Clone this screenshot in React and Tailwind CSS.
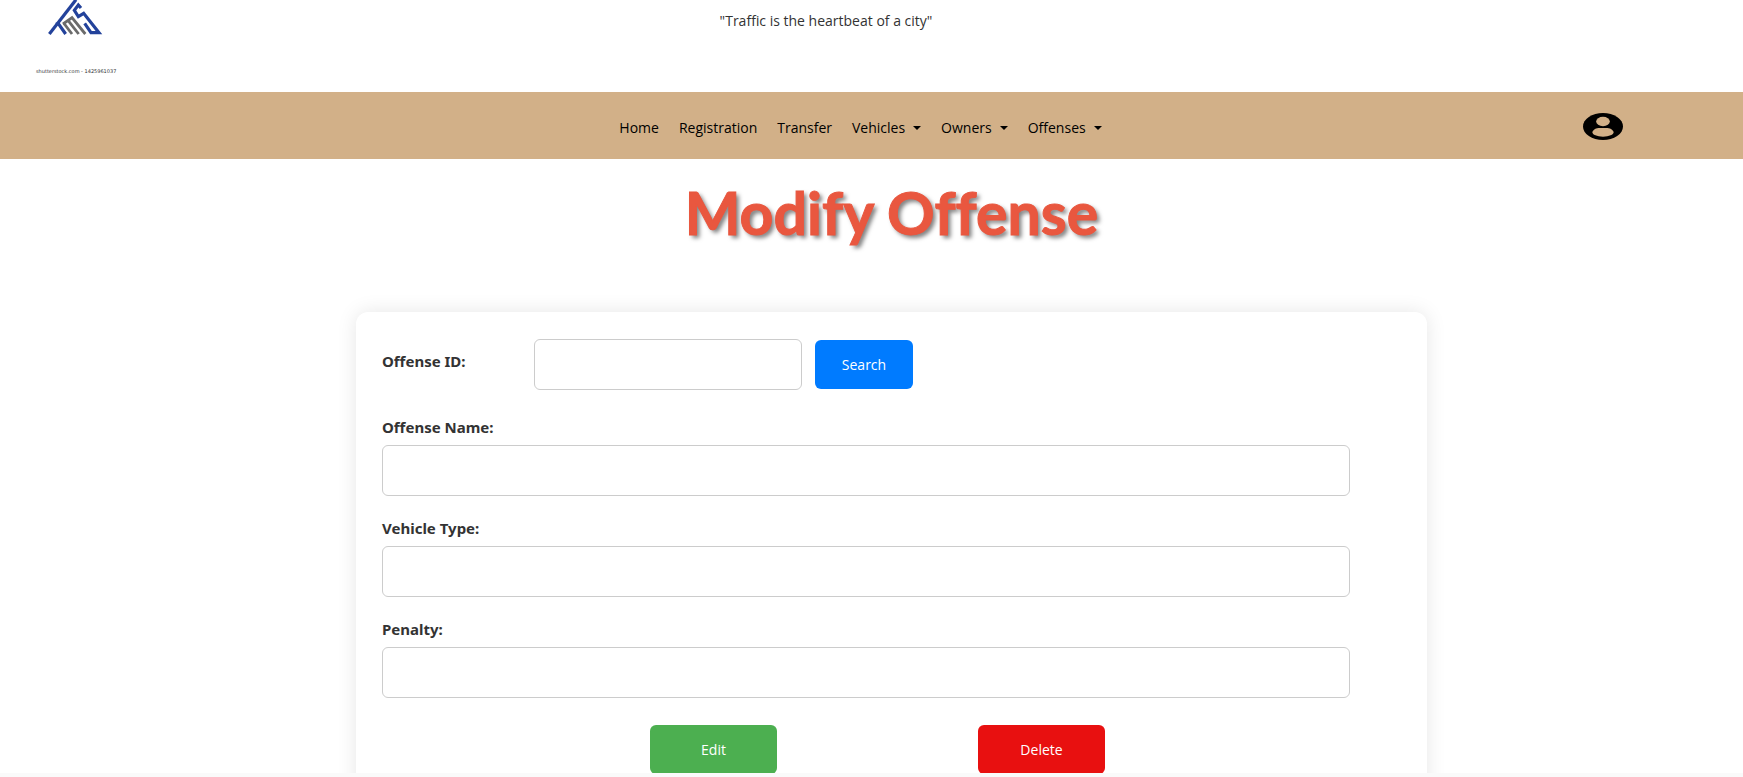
function Logo() {
  return (
    <svg className="ml-[11px] h-[35px] w-14" viewBox="141 0 168 105" fill="none" role="img" aria-label="TMS logo">
      <g stroke="#23429b" strokeWidth="9.5" strokeLinejoin="miter">
        <path d="M228 -1 L148 102" />
        <path d="M167 72 H176 L197 102" />
        <path d="M243 24 L235 15 L223 31 L235 50 L251 40 L297 98 H273 L254 70" />
      </g>
      <g stroke="#6b6b6b" strokeWidth="8.5">
        <path d="M189 72 L216 53 L256 102" />
        <path d="M191 69 L216 102" />
        <path d="M204 61 L236 102" />
      </g>
    </svg>
  );
}

function UserIcon() {
  return (
    <svg className="h-[27px] w-10" viewBox="0 0 120 81" preserveAspectRatio="none">
      <ellipse cx="60" cy="40.500" rx="60" ry="40.500" fill="#000" />
      <ellipse cx="60" cy="25.500" rx="20.500" ry="14" fill="#d2b088" />
      <path d="M28 58 C30 49 40 45 50 45 H70 C80 45 90 49 92 58 C92 65 78 71 60 71 S28 65 28 58Z" fill="#d2b088" />
    </svg>
  );
}

const links = [
  { label: "Home" },
  { label: "Registration" },
  { label: "Transfer" },
  { label: "Vehicles", menu: true },
  { label: "Owners", menu: true },
  { label: "Offenses", menu: true },
];

function NavLink({ label, menu }) {
  return (
    <li>
      <a href="#" className="flex items-center gap-2 text-black">
        {label}
        {menu && (
          <svg className="h-1 w-2" viewBox="0 0 8 4" aria-hidden="true">
            <path d="M0 0H8L4 4Z" fill="currentColor" />
          </svg>
        )}
      </a>
    </li>
  );
}

const inputStyle = "h-[51px] rounded-md border border-[#ccc] bg-white px-3 outline-none";
const labelStyle = "font-['Noto_Sans',sans-serif] text-[15px] leading-6 font-bold";

function Field({ id, label }) {
  return (
    <div className="mb-5 flex flex-col">
      <label htmlFor={id} className={`${labelStyle} mb-1.5`}>{label}</label>
      <input id={id} type="text" className={`${inputStyle} w-[95%]`} />
    </div>
  );
}

export default function App() {
  return (
    <div className="flex h-screen flex-col overflow-hidden bg-white font-['Open_Sans',sans-serif] text-sm text-[#333]">
      <header className="grid h-[92px] shrink-0 grid-cols-[1fr_auto_1fr] pr-[91px]">
        <div className="flex flex-col items-start justify-between pb-4 pl-9">
          <Logo />
          <span className="font-['DejaVu_Sans',sans-serif] text-[5px] leading-[10px]">shutterstock.com - 1425961037</span>
        </div>
        <p className="pt-[9px] leading-6">"Traffic is the heartbeat of a city"</p>
      </header>

      <nav className="grid h-[67px] shrink-0 grid-cols-[1fr_auto_1fr] items-center bg-[#d2b088] pt-0.5 pr-[22px]">
        <ul className="col-start-2 flex gap-5 pt-0.5">
          {links.map((link) => (
            <NavLink key={link.label} {...link} />
          ))}
        </ul>
        <button type="button" aria-label="Account" className="mr-[98px] justify-self-end">
          <UserIcon />
        </button>
      </nav>

      <main className="flex min-h-0 flex-1 flex-col items-center overflow-hidden pl-10">
        <h1 className="mt-[18px] mb-[63px] font-['Comic_Sans_MS','Lato',sans-serif] text-[59px] leading-[72px] font-bold text-[#e9573f] [font-variant-ligatures:none] [-webkit-text-stroke:1px_#e9573f] [text-shadow:3px_3px_4px_rgba(0,0,0,0.5)]">
          Modify Offense
        </h1>
        <form className="w-full max-w-[1071px] shrink-0 rounded-xl bg-white px-[26px] pt-[27px] pb-10 shadow-[0_0_20px_rgba(0,0,0,0.1)]">
          <div className="mb-[25px] flex items-center">
            <label htmlFor="offense-id" className={`${labelStyle} w-[152px] pb-2`}>Offense ID:</label>
            <input id="offense-id" type="text" className={`${inputStyle} w-[268px]`} />
            <button type="button" className="ml-[13px] h-[49px] w-[98px] rounded-md bg-[#007bff] text-white">
              Search
            </button>
          </div>
          <Field id="offense-name" label="Offense Name:" />
          <Field id="vehicle-type" label="Vehicle Type:" />
          <Field id="penalty" label="Penalty:" />
          <div className="mt-[27px] flex gap-[201px] pl-[268px]">
            <button type="button" className="h-[49px] w-[127px] rounded-md bg-[#4caf50] text-white">Edit</button>
            <button type="button" className="h-[49px] w-[127px] rounded-md bg-[#e81010] text-white">Delete</button>
          </div>
        </form>
      </main>
      <footer className="h-1 shrink-0 bg-[#fafafa]" />
    </div>
  );
}
